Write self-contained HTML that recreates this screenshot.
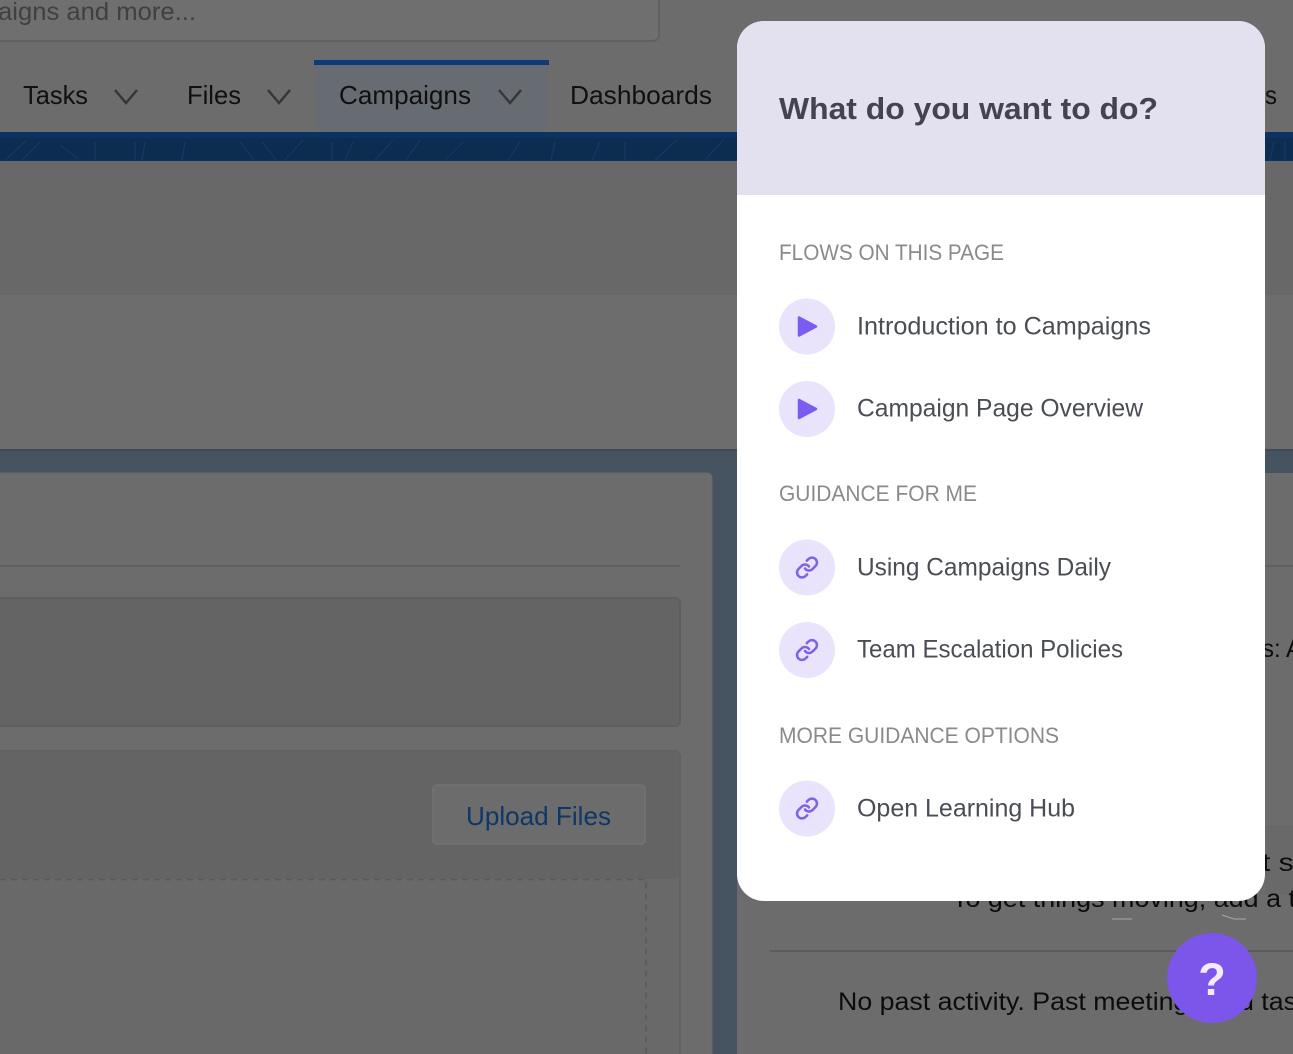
<!DOCTYPE html>
<html lang="en">
<head>
<meta charset="utf-8">
<title>What do you want to do?</title>
<style>
html,body{margin:0;padding:0;width:1293px;height:1054px;overflow:hidden;background:#6c6c6c}
svg{display:block}
text{font-family:"Liberation Sans",sans-serif}
.nav{font-size:26px;fill:#101010}
.lab{font-size:22px;fill:#8a8a8a}
.item{font-size:25px;fill:#4b4d55}
</style>
</head>
<body>
<svg width="1293" height="1054" viewBox="0 0 1293 1054" xmlns="http://www.w3.org/2000/svg">
<rect width="1293" height="1054" fill="#6c6c6c"/>

<!-- search -->
<rect x="-20" y="-20" width="679" height="61" rx="6" fill="#6f6f6f" stroke="#616161" stroke-width="2"/>
<text x="-2" y="20" font-size="25" fill="#404040" textLength="198" lengthAdjust="spacingAndGlyphs">aigns and more...</text>

<!-- nav -->
<rect x="316" y="64" width="231" height="68" fill="#676c73"/>
<rect x="314" y="60" width="235" height="5" fill="#0d3a78"/>
<text class="nav" x="23" y="104" textLength="65" lengthAdjust="spacingAndGlyphs">Tasks</text>
<text class="nav" x="187" y="104" textLength="54" lengthAdjust="spacingAndGlyphs">Files</text>
<text class="nav" x="339" y="104" textLength="132" lengthAdjust="spacingAndGlyphs">Campaigns</text>
<text class="nav" x="570" y="104" textLength="142" lengthAdjust="spacingAndGlyphs">Dashboards</text>
<text class="nav" x="1265" y="104" textLength="12" lengthAdjust="spacingAndGlyphs">s</text>
<g fill="none" stroke="#353535" stroke-width="2.400">
<path d="M115 90l11 13 11-13"/>
<path d="M268 90l11 13 11-13"/>
<path d="M499 90l11 13 11-13"/>
</g>

<!-- stripe -->
<rect y="132" width="1293" height="29" fill="#0c2d50"/>
<rect y="132" width="1293" height="6" fill="#0a3362"/>
<rect y="160" width="1293" height="1" fill="#0a3362"/>
<g fill="none" stroke="#17395f" stroke-width="1.200">
<path d="M5 160l22-20M22 160l18-18M60 145l18 14M95 142v18M135 142v18M145 142l-3 18M185 142l-3 18M240 142l14 18M262 142l14 18M285 160l18-20M332 142v18M345 160l8-18M375 160l18-20M420 140l-14 20M445 160l18-18M520 142l-12 18M555 142l-4 18M600 142l-8 18M625 142v18M655 160l22-20M705 160l18-20M1270 160l4-18M1285 142v18"/>
</g>

<!-- page section -->
<rect y="161" width="1293" height="134" fill="#686868"/>
<rect y="295" width="1293" height="154" fill="#6d6d6d"/>
<rect y="449" width="1293" height="605" fill="#465361"/>
<rect y="449" width="1293" height="2" fill="#404b56"/>
<rect x="-20" y="473" width="732" height="600" rx="5" fill="#6c6c6c" stroke="#65696e"/>
<rect x="737" y="473" width="576" height="600" fill="#6c6c6c"/>

<!-- left card -->
<rect x="0" y="565" width="680" height="2" fill="#606060"/>
<rect x="-20" y="598" width="700" height="128" rx="5" fill="#646464" stroke="#5e5e5e" stroke-width="2"/>
<rect x="-20" y="751" width="700" height="340" rx="5" fill="#696969" stroke="#626262" stroke-width="2"/>
<rect x="-20" y="752" width="699" height="127" rx="5" fill="#646464"/>
<rect x="433" y="785" width="212" height="59" rx="4" fill="#6c6c6c" stroke="#737373" stroke-width="1.500"/>
<text x="466" y="825" font-size="26" fill="#0e3768" textLength="145" lengthAdjust="spacingAndGlyphs">Upload Files</text>
<path d="M0 879.500H646V1054" fill="none" stroke="#595959" stroke-width="1.500" stroke-dasharray="6 5"/>

<!-- right card content -->
<rect x="1265" y="565" width="28" height="2" fill="#606060"/>
<rect x="770" y="950" width="523" height="2" fill="#5c5c5c"/>
<rect x="1265" y="825" width="28" height="70" fill="#696969"/>
<text x="1262" y="657" font-size="25" fill="#0c0c0c" textLength="40" lengthAdjust="spacingAndGlyphs">s: A</text>
<text x="1262" y="871" font-size="25" fill="#0c0c0c" textLength="40" lengthAdjust="spacingAndGlyphs">t st</text>
<text x="952" y="907" font-size="25" fill="#0c0c0c" textLength="344" lengthAdjust="spacingAndGlyphs">To get things moving, add a t</text>
<text x="838" y="1010" font-size="25" fill="#0c0c0c" textLength="459" lengthAdjust="spacingAndGlyphs">No past activity. Past meetings and tas</text>
<path d="M1112 919h20M1222 915l12 4h12" stroke="#a8a8a8" stroke-width="1" fill="none"/>

<!-- panel -->
<path d="M764 21H1238a27 27 0 0 1 27 27V874a27 27 0 0 1-27 27H764a27 27 0 0 1-27-27V48a27 27 0 0 1 27-27z" fill="#ffffff"/>
<path d="M764 21H1238a27 27 0 0 1 27 27V195H737V48a27 27 0 0 1 27-27z" fill="#e3e0ef"/>
<text x="779" y="119" font-size="31" font-weight="700" fill="#45434f" textLength="379" lengthAdjust="spacingAndGlyphs">What do you want to do?</text>

<text class="lab" x="779" y="260" textLength="225" lengthAdjust="spacingAndGlyphs">FLOWS ON THIS PAGE</text>
<text class="lab" x="779" y="501" textLength="198" lengthAdjust="spacingAndGlyphs">GUIDANCE FOR ME</text>
<text class="lab" x="779" y="743" textLength="280" lengthAdjust="spacingAndGlyphs">MORE GUIDANCE OPTIONS</text>

<g fill="#e9e3fc">
<circle cx="807" cy="326.500" r="28"/>
<circle cx="807" cy="409" r="28"/>
<circle cx="807" cy="567.500" r="28"/>
<circle cx="807" cy="650" r="28"/>
<circle cx="807" cy="808.500" r="28"/>
</g>
<g fill="#7a5cf0" stroke="#7a5cf0" stroke-width="2.500" stroke-linejoin="round">
<path d="M799 317.500v18l17-9z"/>
<path d="M799 400v18l17-9z"/>
</g>
<g fill="none" stroke="#7f62e6" stroke-width="2.500" stroke-linecap="round" stroke-linejoin="round">
<g transform="translate(795 555.500)">
<path d="M10 13a5 5 0 0 0 7.540.540l3-3a5 5 0 0 0-7.070-7.070l-1.720 1.710"/>
<path d="M14 11a5 5 0 0 0-7.540-.540l-3 3a5 5 0 0 0 7.070 7.070l1.710-1.710"/>
</g>
<g transform="translate(795 638)">
<path d="M10 13a5 5 0 0 0 7.540.540l3-3a5 5 0 0 0-7.070-7.070l-1.720 1.710"/>
<path d="M14 11a5 5 0 0 0-7.540-.540l-3 3a5 5 0 0 0 7.070 7.070l1.710-1.710"/>
</g>
<g transform="translate(795 796.500)">
<path d="M10 13a5 5 0 0 0 7.540.540l3-3a5 5 0 0 0-7.070-7.070l-1.720 1.710"/>
<path d="M14 11a5 5 0 0 0-7.540-.540l-3 3a5 5 0 0 0 7.070 7.070l1.710-1.710"/>
</g>
</g>

<text class="item" x="857" y="334.500" textLength="294" lengthAdjust="spacingAndGlyphs">Introduction to Campaigns</text>
<text class="item" x="857" y="416.500" textLength="286" lengthAdjust="spacingAndGlyphs">Campaign Page Overview</text>
<text class="item" x="857" y="575.500" textLength="254" lengthAdjust="spacingAndGlyphs">Using Campaigns Daily</text>
<text class="item" x="857" y="657.500" textLength="266" lengthAdjust="spacingAndGlyphs">Team Escalation Policies</text>
<text class="item" x="857" y="816.500" textLength="218" lengthAdjust="spacingAndGlyphs">Open Learning Hub</text>

<!-- fab -->
<circle cx="1212" cy="978" r="45" fill="#7c55ea"/>
<text x="1212" y="995" font-size="45" font-weight="700" fill="#f1ebfb" text-anchor="middle">?</text>
</svg>
</body>
</html>
